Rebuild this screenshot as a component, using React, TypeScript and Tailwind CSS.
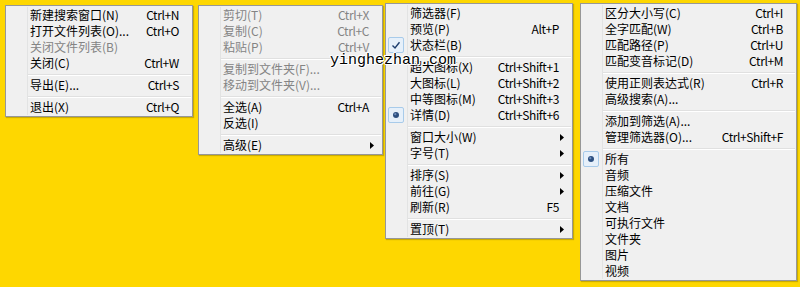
import React from "react";

type Item =
  | "sep"
  | {
      label: string;
      shortcut?: string;
      disabled?: boolean;
      arrow?: boolean;
      check?: boolean;
      radio?: boolean;
    };

const fileMenu: Item[] = [
  { label: "新建搜索窗口(N)", shortcut: "Ctrl+N" },
  { label: "打开文件列表(O)...", shortcut: "Ctrl+O" },
  { label: "关闭文件列表(B)", disabled: true },
  { label: "关闭(C)", shortcut: "Ctrl+W" },
  "sep",
  { label: "导出(E)...", shortcut: "Ctrl+S" },
  "sep",
  { label: "退出(X)", shortcut: "Ctrl+Q" },
];

const editMenu: Item[] = [
  { label: "剪切(T)", shortcut: "Ctrl+X", disabled: true },
  { label: "复制(C)", shortcut: "Ctrl+C", disabled: true },
  { label: "粘贴(P)", shortcut: "Ctrl+V", disabled: true },
  "sep",
  { label: "复制到文件夹(F)...", disabled: true },
  { label: "移动到文件夹(V)...", disabled: true },
  "sep",
  { label: "全选(A)", shortcut: "Ctrl+A" },
  { label: "反选(I)" },
  "sep",
  { label: "高级(E)", arrow: true },
];

const viewMenu: Item[] = [
  { label: "筛选器(F)" },
  { label: "预览(P)", shortcut: "Alt+P" },
  { label: "状态栏(B)", check: true },
  "sep",
  { label: "超大图标(X)", shortcut: "Ctrl+Shift+1" },
  { label: "大图标(L)", shortcut: "Ctrl+Shift+2" },
  { label: "中等图标(M)", shortcut: "Ctrl+Shift+3" },
  { label: "详情(D)", shortcut: "Ctrl+Shift+6", radio: true },
  "sep",
  { label: "窗口大小(W)", arrow: true },
  { label: "字号(T)", arrow: true },
  "sep",
  { label: "排序(S)", arrow: true },
  { label: "前往(G)", arrow: true },
  { label: "刷新(R)", shortcut: "F5" },
  "sep",
  { label: "置顶(T)", arrow: true },
];

const searchMenu: Item[] = [
  { label: "区分大小写(C)", shortcut: "Ctrl+I" },
  { label: "全字匹配(W)", shortcut: "Ctrl+B" },
  { label: "匹配路径(P)", shortcut: "Ctrl+U" },
  { label: "匹配变音标记(D)", shortcut: "Ctrl+M" },
  "sep",
  { label: "使用正则表达式(R)", shortcut: "Ctrl+R" },
  { label: "高级搜索(A)..." },
  "sep",
  { label: "添加到筛选(A)..." },
  { label: "管理筛选器(O)...", shortcut: "Ctrl+Shift+F" },
  "sep",
  { label: "所有", radio: true },
  { label: "音频" },
  { label: "压缩文件" },
  { label: "文档" },
  { label: "可执行文件" },
  { label: "文件夹" },
  { label: "图片" },
  { label: "视频" },
];

function Mark({ check }: { check?: boolean }) {
  return (
    <div className="flex h-[16px] w-[16px] items-center justify-center rounded-[2px] border border-[#a8cbea] bg-[#e6f0fa]">
      {check ? (
        <svg width="10" height="9" viewBox="0 0 10 9">
          <path d="M1.5 4.5 L4 7 L8.5 1.2" fill="none" stroke="#1e3e6e" strokeWidth="1.4" />
        </svg>
      ) : (
        <svg width="8" height="8" viewBox="0 0 8 8">
          <circle cx="4" cy="4" r="3" fill="#2c4f80" />
          <circle cx="3.3" cy="3.2" r="1.1" fill="#6f8fbd" />
        </svg>
      )}
    </div>
  );
}

function Menu({ items, className }: { items: Item[]; className: string }) {
  return (
    <div
      className={`shrink-0 border border-[#979797] bg-[#f0f0f0] py-[1px] shadow-[1px_1px_1px_rgba(0,0,0,0.2)] ${className}`}
    >
      {items.map((item, i) =>
        item === "sep" ? (
          <div key={i} className="flex h-[6px]">
            <div className="w-[22px] shrink-0 border-r border-[#e2e3e3]" />
            <div className="flex flex-1 flex-col justify-center pr-[1px] pt-[2px]">
              <div className="h-px bg-[#e0e0e0]" />
              <div className="h-px bg-white" />
            </div>
          </div>
        ) : (
          <div
            key={i}
            className={`flex h-[16px] items-center leading-[16px] ${item.disabled ? "text-[#848484]" : "text-black"} ${item.arrow ? "pr-[8px]" : "pr-[13px]"}`}
          >
            <div className="flex h-full w-[22px] shrink-0 items-center border-r border-[#e2e3e3] pl-[2px]">
              {item.check && <Mark check />}
              {item.radio && <Mark />}
            </div>
            <span className="flex-1 whitespace-nowrap pl-[2px]">{item.label}</span>
            {item.shortcut && <span className="whitespace-nowrap tracking-[-0.4px]">{item.shortcut}</span>}
            {item.arrow && (
              <svg width="4" height="7" viewBox="0 0 4 7">
                <path d="M0 0 L4 3.5 L0 7 Z" fill="#000" />
              </svg>
            )}
          </div>
        )
      )}
    </div>
  );
}

export default function App() {
  return (
    <div
      className="relative flex h-[287px] w-[800px] items-start overflow-hidden bg-[#fed700] pl-[5px] text-[12px]"
      style={{ fontFamily: '"Noto Sans CJK SC", "Noto Sans", sans-serif' }}
    >
      <Menu items={fileMenu} className="mt-[5px] w-[188px]" />
      <Menu items={editMenu} className="ml-[5px] mt-[5px] w-[185px]" />
      <Menu items={viewMenu} className="ml-[2px] mt-[3px] w-[188px]" />
      <Menu items={searchMenu} className="ml-[7px] mt-[3px] w-[217px]" />

      <div className="absolute left-[330px] top-[52px] font-['Liberation_Mono',monospace] text-[15px] leading-[18px] text-black [text-shadow:-1px_0_#fff,1px_0_#fff,0_-1px_#fff,0_1px_#fff,1px_1px_#fff,-1px_-1px_#fff]">
        yinghezhan.com
      </div>
    </div>
  );
}
